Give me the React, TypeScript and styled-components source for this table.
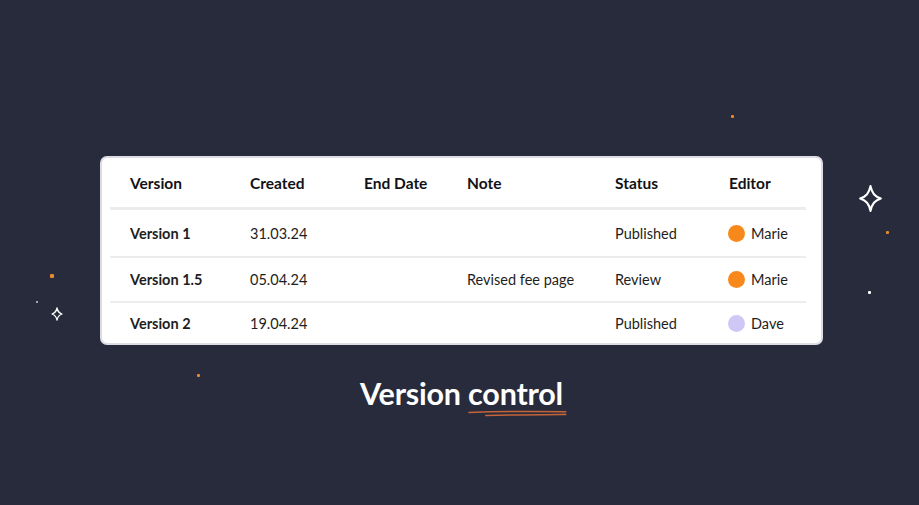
import React from "react";
import styled, { createGlobalStyle } from "styled-components";

const Global = createGlobalStyle`
  html, body { margin: 0; padding: 0; background: #272b3b; }
  body { font-family: "Lato", "Noto Sans", sans-serif; }
`;

const Stage = styled.div`
  position: relative;
  width: 919px;
  height: 505px;
  overflow: hidden;
  background: #272b3b;
  display: flex;
  flex-direction: column;
  align-items: center;
  padding-top: 156px;
  box-sizing: border-box;
`;

const Card = styled.div`
  align-self: flex-start;
  margin-left: 100px;
  width: 723px;
  height: 189px;
  box-sizing: border-box;
  background: #ffffff;
  border: 2px solid #dcdce2;
  border-radius: 7px;
  padding: 0 15px 0 8px;
  display: flex;
  flex-direction: column;
`;

const Row = styled.div<{ $h: number; $sep?: number }>`
  display: grid;
  grid-template-columns: 120px 114px 103px 148px 114px 1fr;
  align-items: center;
  height: ${(p) => p.$h}px;
  padding-left: 20px;
  border-bottom: ${(p) => (p.$sep ? `${p.$sep}px solid #ececee` : "none")};
  color: #1b1b1f;
`;

const Head = styled.div`
  font-weight: 700;
  font-size: 15.5px;
  color: #121216;
`;

const Cell = styled.div<{ $bold?: boolean }>`
  font-size: 14.5px;
  font-weight: ${(p) => (p.$bold ? 700 : 400)};
  color: #1e1e22;
  white-space: nowrap;
`;

const Editor = styled.div`
  display: flex;
  align-items: center;
  gap: 6px;
  margin-left: -1px;
  font-size: 14.5px;
  color: #1e1e22;
`;

const Dot = styled.span<{ $c: string }>`
  width: 17px;
  height: 17px;
  border-radius: 50%;
  background: ${(p) => p.$c};
  display: inline-block;
`;

const Caption = styled.div`
  margin-top: 30px;
  margin-left: 4px;
  font-size: 30.5px;
  font-weight: 700;
  color: #ffffff;
  letter-spacing: -0.2px;
  line-height: 36px;
`;

const Underlined = styled.span`
  position: relative;
  display: inline-block;
`;

const Swoosh = styled.svg`
  position: absolute;
  left: 0;
  bottom: -7px;
  width: 104%;
  height: 8px;
  overflow: visible;
`;

const Deco = styled.div<{ $x: number; $y: number }>`
  position: absolute;
  left: ${(p) => p.$x}px;
  top: ${(p) => p.$y}px;
`;

const Spark = styled.span<{ $c: string; $s: number }>`
  display: block;
  width: ${(p) => p.$s}px;
  height: ${(p) => p.$s}px;
  background: ${(p) => p.$c};
  border-radius: 1px;
`;

const Star = ({ w, h, sw }: { w: number; h: number; sw: number }) => (
  <svg width={w} height={h} viewBox="0 0 24 28" fill="none">
    <path
      d="M12 2 C13.5 9 16 12 22 14 C16 16 13.5 19 12 26 C10.5 19 8 16 2 14 C8 12 10.5 9 12 2 Z"
      stroke="#ffffff"
      strokeWidth={sw}
      strokeLinejoin="round"
    />
  </svg>
);

const rows = [
  { v: "Version 1", c: "31.03.24", n: "", s: "Published", e: "Marie", col: "#f7891c", h: 46, sep: 2 },
  { v: "Version 1.5", c: "05.04.24", n: "Revised fee page", s: "Review", e: "Marie", col: "#f7891c", h: 44, sep: 2 },
  { v: "Version 2", c: "19.04.24", n: "", s: "Published", e: "Dave", col: "#cfc8f7", h: 40, sep: 0 },
];

export default function App() {
  return (
    <>
      <Global />
      <Stage>
        <Deco $x={858} $y={184}><Star w={25} h={29} sw={2} /></Deco>
        <Deco $x={50} $y={305}><Star w={14} h={14} sw={2.6} /></Deco>
        <Deco $x={731} $y={115}><Spark $c="#e8892c" $s={3} /></Deco>
        <Deco $x={886} $y={231}><Spark $c="#e8892c" $s={3} /></Deco>
        <Deco $x={50} $y={274}><Spark $c="#e8892c" $s={4} /></Deco>
        <Deco $x={197} $y={374}><Spark $c="#e8892c" $s={3} /></Deco>
        <Deco $x={868} $y={291}><Spark $c="#ffffff" $s={3} /></Deco>
        <Deco $x={36} $y={301}><Spark $c="#cfd2dc" $s={1.5} /></Deco>
        <Card>
          <Row $h={50} $sep={3}>
            <Head>Version</Head>
            <Head>Created</Head>
            <Head>End Date</Head>
            <Head>Note</Head>
            <Head>Status</Head>
            <Head>Editor</Head>
          </Row>
          {rows.map((r) => (
            <Row key={r.v} $h={r.h} $sep={r.sep}>
              <Cell $bold>{r.v}</Cell>
              <Cell>{r.c}</Cell>
              <Cell></Cell>
              <Cell>{r.n}</Cell>
              <Cell>{r.s}</Cell>
              <Editor>
                <Dot $c={r.col} />
                {r.e}
              </Editor>
            </Row>
          ))}
        </Card>
        <Caption>
          Version{" "}
          <Underlined>
            control
            <Swoosh viewBox="0 0 100 8" preserveAspectRatio="none">
              <path d="M1 2.5 C30 1.5 70 1.2 99 1.8" stroke="#c5633a" strokeWidth="1.6" fill="none" strokeLinecap="round" />
              <path d="M18 5.5 C45 4.8 75 4.6 99 4.4" stroke="#c5633a" strokeWidth="1.6" fill="none" strokeLinecap="round" />
            </Swoosh>
          </Underlined>
        </Caption>
      </Stage>
    </>
  );
}
